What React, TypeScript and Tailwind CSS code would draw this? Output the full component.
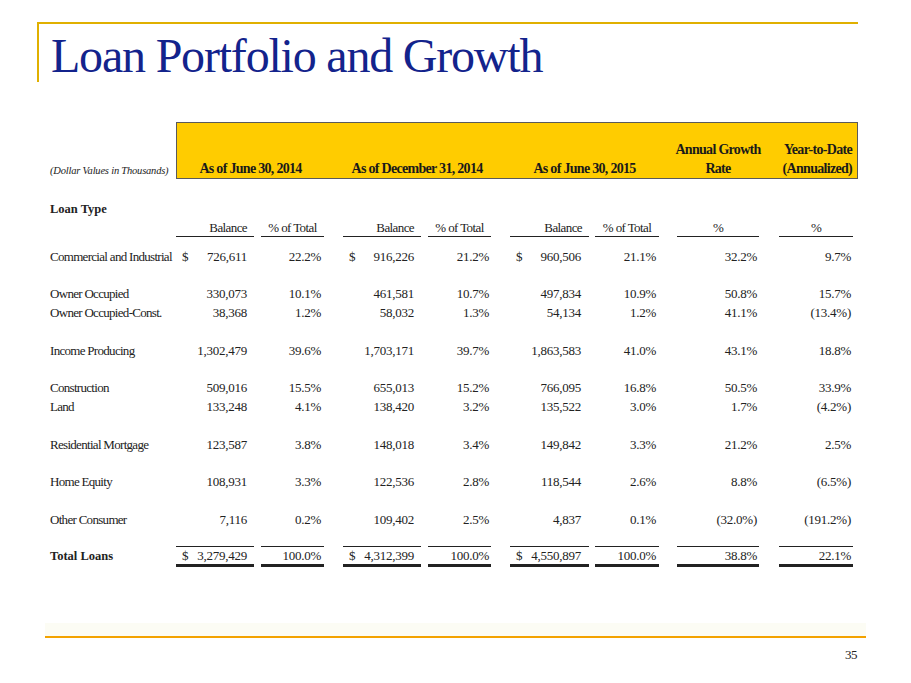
import React from 'react';

type Cell = { v: string; dollar?: boolean };

const rows: { label: string; cells: Cell[]; gap?: boolean }[] = [
  { label: 'Commercial and Industrial', cells: [{ v: '726,611', dollar: true }, { v: '22.2%' }, { v: '916,226', dollar: true }, { v: '21.2%' }, { v: '960,506', dollar: true }, { v: '21.1%' }, { v: '32.2%' }, { v: '9.7%' }] },
  { label: 'Owner Occupied', gap: true, cells: [{ v: '330,073' }, { v: '10.1%' }, { v: '461,581' }, { v: '10.7%' }, { v: '497,834' }, { v: '10.9%' }, { v: '50.8%' }, { v: '15.7%' }] },
  { label: 'Owner Occupied-Const.', cells: [{ v: '38,368' }, { v: '1.2%' }, { v: '58,032' }, { v: '1.3%' }, { v: '54,134' }, { v: '1.2%' }, { v: '41.1%' }, { v: '(13.4%)' }] },
  { label: 'Income Producing', gap: true, cells: [{ v: '1,302,479' }, { v: '39.6%' }, { v: '1,703,171' }, { v: '39.7%' }, { v: '1,863,583' }, { v: '41.0%' }, { v: '43.1%' }, { v: '18.8%' }] },
  { label: 'Construction', gap: true, cells: [{ v: '509,016' }, { v: '15.5%' }, { v: '655,013' }, { v: '15.2%' }, { v: '766,095' }, { v: '16.8%' }, { v: '50.5%' }, { v: '33.9%' }] },
  { label: 'Land', cells: [{ v: '133,248' }, { v: '4.1%' }, { v: '138,420' }, { v: '3.2%' }, { v: '135,522' }, { v: '3.0%' }, { v: '1.7%' }, { v: '(4.2%)' }] },
  { label: 'Residential Mortgage', gap: true, cells: [{ v: '123,587' }, { v: '3.8%' }, { v: '148,018' }, { v: '3.4%' }, { v: '149,842' }, { v: '3.3%' }, { v: '21.2%' }, { v: '2.5%' }] },
  { label: 'Home Equity', gap: true, cells: [{ v: '108,931' }, { v: '3.3%' }, { v: '122,536' }, { v: '2.8%' }, { v: '118,544' }, { v: '2.6%' }, { v: '8.8%' }, { v: '(6.5%)' }] },
  { label: 'Other Consumer', gap: true, cells: [{ v: '7,116' }, { v: '0.2%' }, { v: '109,402' }, { v: '2.5%' }, { v: '4,837' }, { v: '0.1%' }, { v: '(32.0%)' }, { v: '(191.2%)' }] },
];

const total: Cell[] = [{ v: '3,279,429', dollar: true }, { v: '100.0%' }, { v: '4,312,399', dollar: true }, { v: '100.0%' }, { v: '4,550,897', dollar: true }, { v: '100.0%' }, { v: '38.8%' }, { v: '22.1%' }];

// data column widths and the spacer that follows each
const cols = [
  { w: 'w-[78px]', pad: 'pl-[6px] pr-[7px]', sp: 'w-[7px]' },
  { w: 'w-[63px]', pad: 'pr-[3px]', sp: 'w-[19px]' },
  { w: 'w-[78px]', pad: 'pl-[6px] pr-[7px]', sp: 'w-[7px]' },
  { w: 'w-[63px]', pad: 'pr-[2px]', sp: 'w-[19px]' },
  { w: 'w-[79px]', pad: 'pl-[6px] pr-[8px]', sp: 'w-[6px]' },
  { w: 'w-[64px]', pad: 'pr-[3px]', sp: 'w-[18px]' },
  { w: 'w-[82px]', pad: 'pr-[2px]', sp: 'w-[20px]' },
  { w: 'w-[74px]', pad: 'pr-[2px]', sp: '' },
];

function DataRow({ label, cells, kind }: { label: string; cells: Cell[]; kind?: 'total' }) {
  const isTotal = kind === 'total';
  return (
    <div className={`flex ${isTotal ? 'h-[21px] mt-[17px]' : 'h-[19px]'}`}>
      <div className={`w-[126px] shrink-0 flex items-center whitespace-nowrap ${isTotal ? 'font-bold tracking-[0px] text-[12.5px]' : 'tracking-[-0.7px]'}`}>{label}</div>
      {cells.map((c, i) => (
        <React.Fragment key={i}>
          <div
            className={`${cols[i].w} ${cols[i].pad} shrink-0 flex items-center tracking-[-0.25px] ${c.dollar ? 'justify-between' : 'justify-end'} ${isTotal ? 'border-t border-b-[3px] border-[#222]' : ''}`}
          >
            {c.dollar && <span>$</span>}
            <span>{c.v}</span>
          </div>
          {cols[i].sp && <div className={`${cols[i].sp} shrink-0`} />}
        </React.Fragment>
      ))}
    </div>
  );
}

export default function App() {
  return (
    <div className="w-[911px] h-[683px] bg-white flex flex-col font-['Liberation_Serif',serif] text-[#222] overflow-hidden">
      <div className="ml-[37px] mt-[22px] w-[821px] h-[60px] border-t-2 border-l-2 border-[#e0b000] pl-[12px] pt-[8px] shrink-0">
        <h1 className="text-[48px] leading-[48px] tracking-[-1.2px] text-[#13238c]">Loan Portfolio and Growth</h1>
      </div>

      <div className="ml-[50px] mt-[40px] text-[13px]">
        <div className="flex items-end">
          <div className="w-[126px] shrink-0 italic text-[10.5px] tracking-[-0.2px] leading-[14px] pb-[1px] whitespace-nowrap">(Dollar Values in Thousands)</div>
          <div className="w-[682px] h-[57px] bg-[#ffcc00] border border-[#5a5a5a] flex items-end text-[14px] font-bold tracking-[-0.7px] leading-[19px] text-[#1a1a1a] whitespace-nowrap">
            <div className="w-[147px] shrink-0 text-center">As of June 30, 2014</div>
            <div className="w-[19px] shrink-0" />
            <div className="w-[148px] shrink-0 text-center">As of December 31, 2014</div>
            <div className="w-[19px] shrink-0" />
            <div className="w-[149px] shrink-0 text-center">As of June 30, 2015</div>
            <div className="w-[18px] shrink-0" />
            <div className="w-[82px] shrink-0 flex flex-col items-center">
              <div>Annual Growth</div>
              <div>Rate</div>
            </div>
            <div className="w-[20px] shrink-0" />
            <div className="w-[74px] shrink-0 flex flex-col items-end pr-[1px]">
              <div>Year-to-Date</div>
              <div>(Annualized)</div>
            </div>
          </div>
        </div>

        <div className="mt-[21px] h-[19px] flex items-center font-bold text-[12.5px]">Loan Type</div>

        <div className="flex h-[18px]">
          <div className="w-[126px] shrink-0" />
          {cols.map((c, i) => (
            <React.Fragment key={i}>
              <div className={`${c.w} shrink-0 border-b border-[#222] flex items-center tracking-[-0.6px] ${i % 2 === 0 && i < 6 ? 'justify-end pr-[7px]' : 'justify-center'}`}>
                {i % 2 === 0 && i < 6 ? 'Balance' : i < 6 ? '% of Total' : '%'}
              </div>
              {c.sp && <div className={`${c.sp} shrink-0`} />}
            </React.Fragment>
          ))}
        </div>

        <div className="mt-[10px]">
          {rows.map((r) => (
            <React.Fragment key={r.label}>
              {r.gap && <div className="h-[18.5px]" />}
              <DataRow label={r.label} cells={r.cells} />
            </React.Fragment>
          ))}
          <DataRow label="Total Loans" cells={total} kind="total" />
        </div>
      </div>

      <div className="mt-auto shrink-0">
        <div className="ml-[45px] w-[821px] h-[13px] bg-[#fcfcf4]" />
        <div className="ml-[45px] w-[821px] h-[2px] bg-[#f3a200]" />
        <div className="ml-[45px] w-[821px] mt-[9px] h-[16px] flex items-center justify-end pr-[9px] text-[13px] tracking-[-0.5px]">35</div>
        <div className="h-[20px]" />
      </div>
    </div>
  );
}
